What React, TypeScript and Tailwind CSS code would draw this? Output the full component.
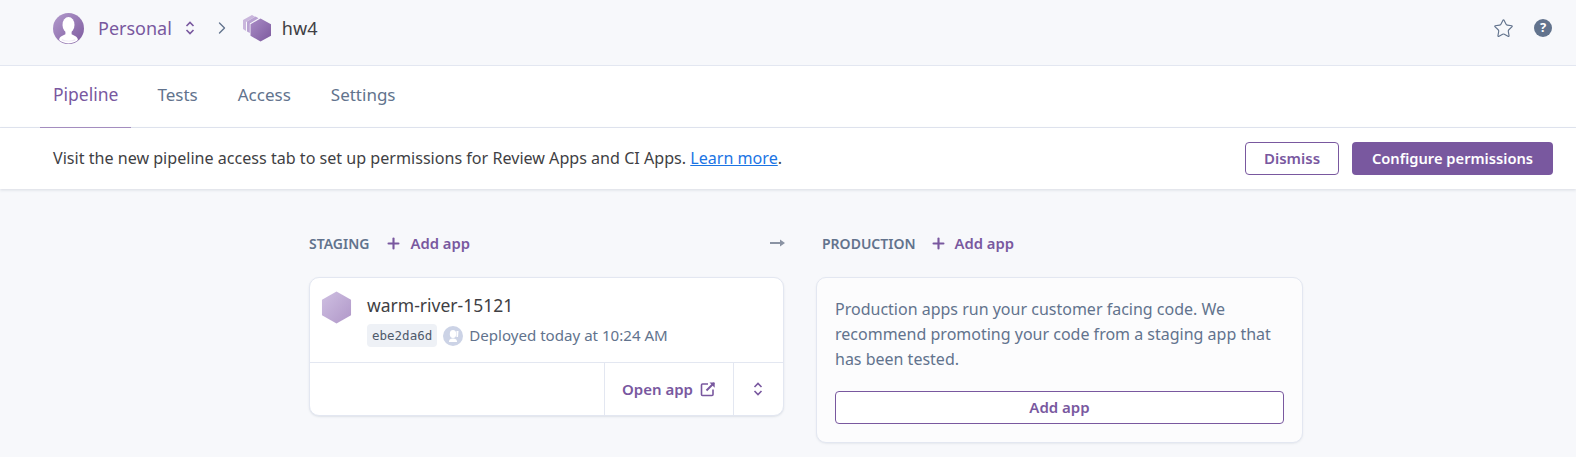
import React from 'react';
import { Star, ChevronRight, Plus } from 'lucide-react';

const Chevrons = ({ className }: { className?: string }) => (
  <svg viewBox="0 0 12 16" className={className} fill="none" stroke="currentColor" strokeWidth="1.6">
    <path d="M2.5 6 L6 2.4 L9.5 6" />
    <path d="M2.5 10 L6 13.6 L9.5 10" />
  </svg>
);

const Avatar = () => (
  <svg viewBox="0 0 30 30" className="w-[31px] h-[31px]">
    <defs>
      <linearGradient id="av" x1="0" y1="0" x2="1" y2="1">
        <stop offset="0" stopColor="#b39bcd" />
        <stop offset="1" stopColor="#7d5a9e" />
      </linearGradient>
      <clipPath id="avc"><circle cx="15" cy="15" r="14.5" /></clipPath>
    </defs>
    <circle cx="15" cy="15" r="15" fill="url(#av)" />
    <g clipPath="url(#avc)" fill="#fff">
      <ellipse cx="15" cy="11.5" rx="5.8" ry="7.6" />
      <path d="M12 17 L18 17 L18 20.5 C20.5 22 23.5 22.5 24 25.5 L24 30 L6 30 L6 25.5 C6.5 22.5 9.5 22 12 20.5 Z" />
    </g>
    <path d="M8.5 25 C12 27.5 18 27.5 21.5 25 L21.5 26.5 C18 28 12 28 8.5 26.5 Z" fill="#f0eaf6" />
  </svg>
);

const StackIcon = () => (
  <svg viewBox="0 0 30 28" className="w-[30px] h-[28px]">
    <defs>
      <linearGradient id="st" x1="0" y1="0" x2="1" y2="1">
        <stop offset="0" stopColor="#a98cc6" />
        <stop offset="1" stopColor="#7d5a9e" />
      </linearGradient>
    </defs>
    <path d="M10 1 L1 6 L1 15 L4 17 L4 8 L13 2.8 Z" fill="#c9b6dc" />
    <path d="M13.5 2.6 L5 7.5 L5 17.5 L7.8 19 L7.8 9.5 L16.5 4.3 Z" fill="#b9a2d2" />
    <path d="M18.5 4.5 L29 10.3 L29 21.7 L18.5 27.5 L8.5 21.7 L8.5 10.3 Z" fill="url(#st)" />
  </svg>
);

const HexIcon = () => (
  <svg viewBox="0 0 32 34" className="w-[31px] h-[33px]">
    <defs>
      <linearGradient id="hx" x1="0" y1="0" x2="1" y2="1">
        <stop offset="0" stopColor="#cfc0e2" />
        <stop offset="1" stopColor="#b097c8" />
      </linearGradient>
    </defs>
    <path d="M16 0.5 L31 9 L31 25 L16 33.5 L1 25 L1 9 Z" fill="url(#hx)" />
  </svg>
);

const UserBadge = () => (
  <svg viewBox="0 0 20 20" className="w-5 h-5">
    <circle cx="10" cy="10" r="10" fill="#ccd3e6" />
    <ellipse cx="10" cy="8" rx="3.2" ry="4" fill="#fff" />
    <path d="M6 16 C6 13 8 12.5 10 12.5 C12 12.5 14 13 14 16 Z" fill="#fff" />
    <path d="M13.5 5 L15.5 5 L15 11 L13.5 11 Z" fill="#fff" />
  </svg>
);

const ExternalIcon = () => (
  <svg viewBox="0 0 16 16" className="w-4 h-4" fill="none" stroke="#79589f" strokeWidth="1.6">
    <path d="M8 3 L2.5 3 Q1.5 3 1.5 4 L1.5 13.5 Q1.5 14.5 2.5 14.5 L12 14.5 Q13 14.5 13 13.5 L13 8.5" />
    <path d="M6.5 9.5 L14 2" strokeWidth="2" />
    <path d="M9.5 1.5 L14.7 1.5 L14.7 6.7 Z" fill="#79589f" stroke="none" />
  </svg>
);

const FlowArrow = () => (
  <svg viewBox="0 0 15 8" className="w-[15px] h-[8px]">
    <path d="M0 3 L10 3 L10 0.5 L15 4 L10 7.5 L10 5 L0 5 Z" fill="#8a93a3" />
  </svg>
);

const AddApp = () => (
  <button className="flex items-center gap-[8px] text-[14.8px] font-semibold text-[#79589f]">
    <Plus className="w-[17px] h-[17px]" strokeWidth={3} />
    Add app
  </button>
);

export default function App() {
  const tabs = ['Tests', 'Access', 'Settings'];

  return (
    <div className="h-[457px] overflow-hidden bg-[#f7f8fb] text-[#3f3f44]" style={{ fontFamily: '"Noto Sans", sans-serif' }}>
      {/* top bar */}
      <header className="h-[66px] border-b border-[#e3e7f1] flex items-center justify-between pl-[53px] pr-[24px] pb-[9px]">
        <div className="flex items-center">
          <Avatar />
          <span className="ml-[14px] text-[18px] text-[#79589f]">Personal</span>
          <Chevrons className="ml-[12px] w-[12px] h-[16px] text-[#79589f]" />
          <ChevronRight className="ml-[16px] w-[20px] h-[20px] text-[#62738d]" strokeWidth={1.6} />
          <span className="ml-[10px]"><StackIcon /></span>
          <span className="ml-[10px] text-[18px] text-[#3f3f44]">hw4</span>
        </div>
        <div className="flex items-center gap-[20px]">
          <Star className="w-[21px] h-[21px] text-[#62738d]" strokeWidth={1.3} />
          <span className="w-[18px] h-[18px] rounded-full bg-[#62738d] text-white text-[13px] font-bold flex items-center justify-center">?</span>
        </div>
      </header>

      {/* tabs */}
      <nav className="h-[62px] bg-white border-b border-[#e3e7f1] flex pl-[40px]">
        <a className="h-[62px] px-[13px] pb-[5px] border-b border-[#a78fc2] flex items-center text-[17.5px] text-[#79589f]">Pipeline</a>
        <div className="flex ml-[26px] gap-[40px] pb-[4px]">
          {tabs.map((t) => (
            <a key={t} className="flex items-center text-[17px] text-[#62738d]">{t}</a>
          ))}
        </div>
      </nav>

      {/* notice */}
      <div className="h-[61px] bg-white flex items-center justify-between pl-[53px] pr-[23px] shadow-[0_1px_3px_rgba(89,105,129,0.2)] relative">
        <p className="text-[16.1px] text-[#3f3f44]">
          Visit the new pipeline access tab to set up permissions for Review Apps and CI Apps.{' '}
          <a className="text-[#1b74e4] underline">Learn more</a>.
        </p>
        <div className="flex gap-[13px]">
          <button className="w-[94px] h-[33px] rounded-[4px] border border-[#79589f] bg-white text-[15px] font-semibold text-[#79589f]">Dismiss</button>
          <button className="w-[201px] h-[33px] rounded-[4px] bg-[#79589f] text-[14.7px] font-semibold text-white">Configure permissions</button>
        </div>
      </div>

      {/* pipeline */}
      <main className="flex pl-[309px] pt-[43px]">
        <section className="w-[475px]">
          <div className="h-[22px] flex items-center">
            <span className="text-[14px] font-semibold text-[#62738d]">STAGING</span>
            <span className="ml-[16px]"><AddApp /></span>
            <span className="ml-auto mr-[-1px] flex"><FlowArrow /></span>
          </div>
          <div className="mt-[23px] h-[139px] rounded-[10px] bg-white border border-[#e3e7f1] shadow-[0_1px_2px_rgba(89,105,129,0.15)] flex flex-col">
            <div className="h-[85px] flex pl-[11px] pt-[13px] border-b border-[#e3e7f1]">
              <HexIcon />
              <div className="ml-[15px] -mt-[1px]">
                <div className="text-[17.5px] leading-[30px] text-[#3f3f44]">warm-river-15121</div>
                <div className="flex items-center mt-[4px]">
                  <code className="h-[23px] px-[5px] rounded-[4px] bg-[#eef1f6] text-[12.5px] leading-[23px] text-[#4f5a6b]" style={{ fontFamily: '"DejaVu Sans Mono", monospace' }}>ebe2da6d</code>
                  <span className="ml-[6px]"><UserBadge /></span>
                  <span className="ml-[6px] text-[15.1px] text-[#62738d]">Deployed today at 10:24 AM</span>
                </div>
              </div>
            </div>
            <div className="flex-1 flex justify-end">
              <button className="w-[129px] border-l border-[#e3e7f1] flex items-center justify-center gap-[7px] text-[15px] font-semibold text-[#79589f]">
                Open app <ExternalIcon />
              </button>
              <button className="w-[50px] border-l border-[#e3e7f1] flex items-center justify-center text-[#79589f] pr-[2px]">
                <Chevrons className="w-[12px] h-[16px]" />
              </button>
            </div>
          </div>
        </section>

        <section className="ml-[32px] w-[487px]">
          <div className="h-[22px] flex items-center pl-[6px]">
            <span className="text-[14px] font-semibold text-[#62738d]">PRODUCTION</span>
            <span className="ml-[14px]"><AddApp /></span>
          </div>
          <div className="mt-[23px] h-[166px] rounded-[10px] bg-[#fcfcfd] border border-[#e3e7f1] shadow-[0_1px_2px_rgba(89,105,129,0.1)] pt-[19px] px-[18px]">
            <p className="text-[16px] leading-[25px] text-[#62738d]">
              Production apps run your customer facing code. We recommend promoting your code from a staging app that has been tested.
            </p>
            <button className="mt-[19px] w-full h-[33px] rounded-[4px] border border-[#79589f] bg-white text-[15px] font-semibold text-[#79589f]">Add app</button>
          </div>
        </section>
      </main>
    </div>
  );
}
